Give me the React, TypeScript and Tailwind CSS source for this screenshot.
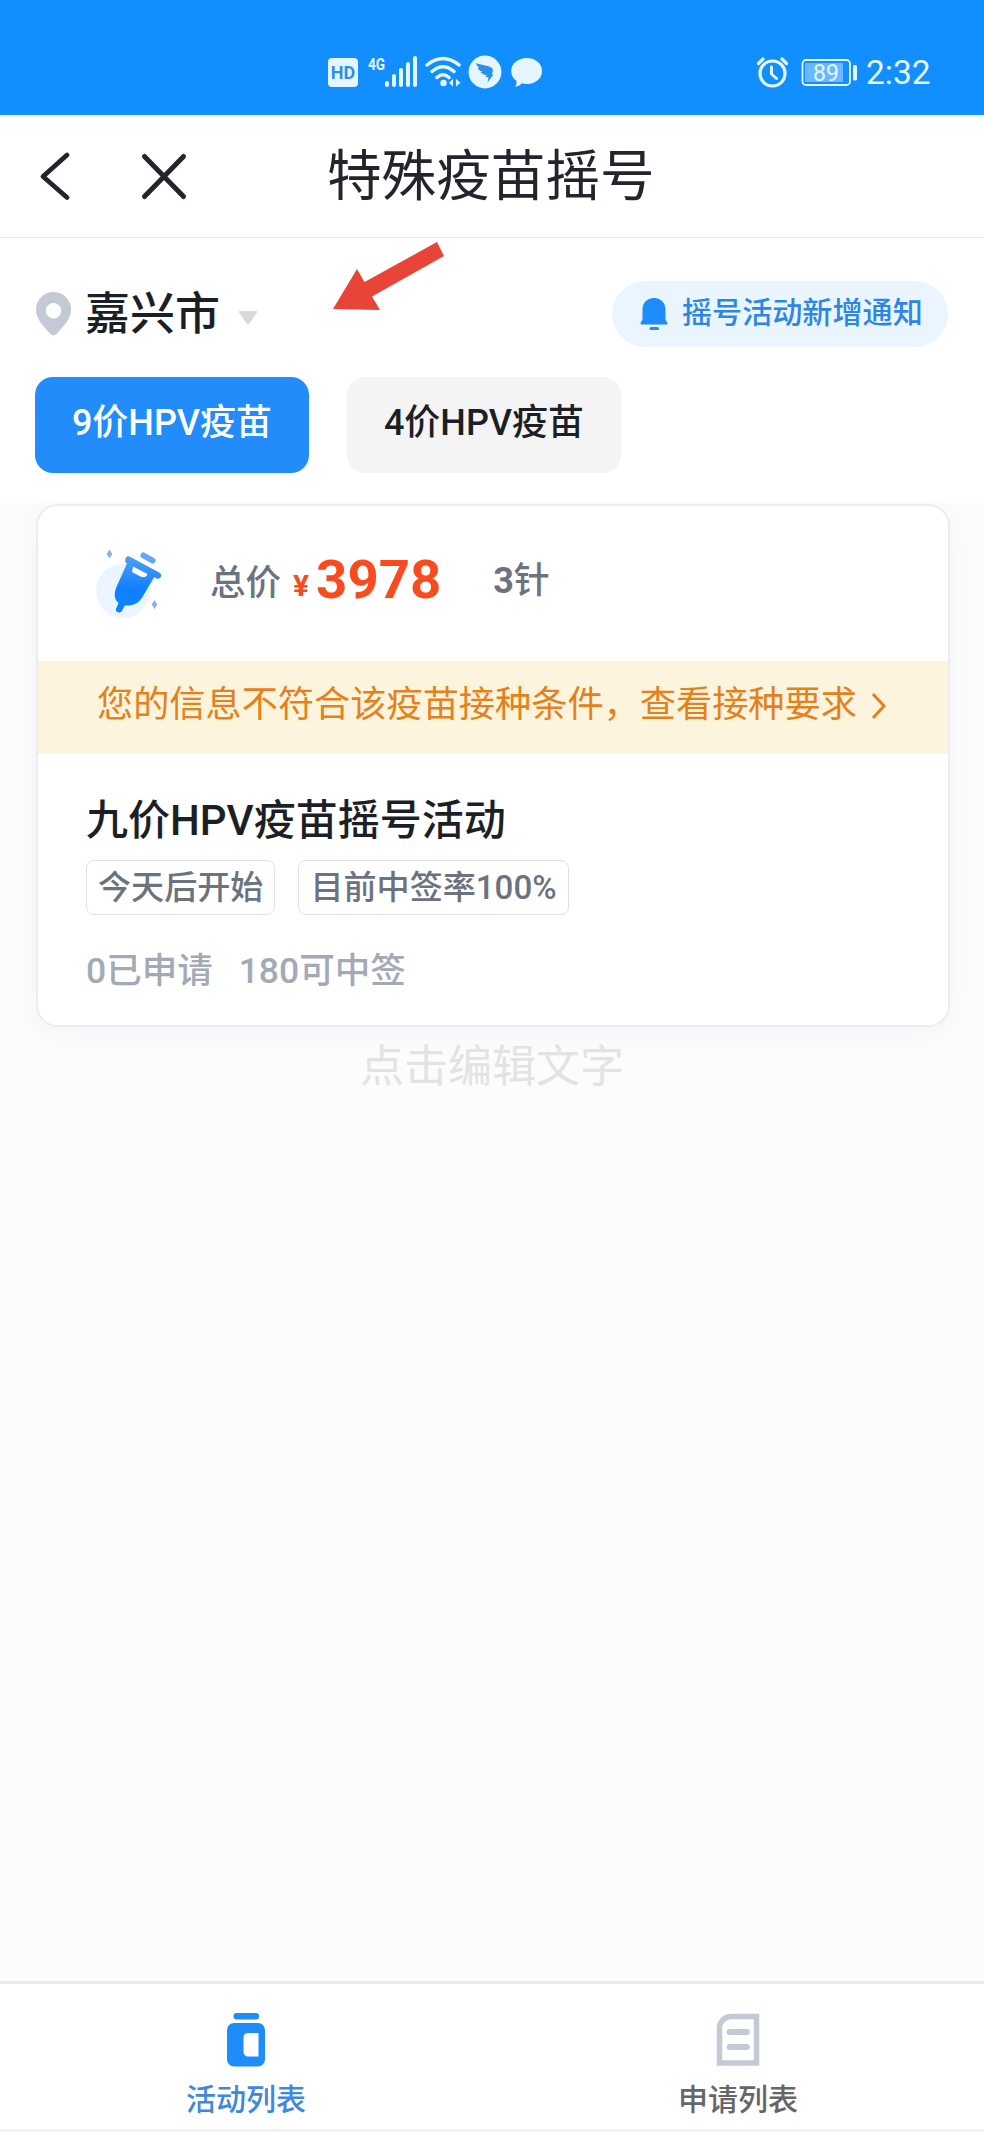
import React, { useState } from 'react';

const tabs = ['9价HPV疫苗', '4价HPV疫苗'];
const tags = ['今天后开始', '目前中签率100%'];

const StatusBar = () => (
  <div className="flex h-[115px] items-end bg-[#128fff] pb-[25px] text-[#e6f6ff]">
    <svg className="ml-[326px] h-[36px] w-[220px] shrink-0" viewBox="326 54 220 36" fill="currentColor">
      <rect x="328" y="58" width="30" height="29" rx="4" />
      <text x="343" y="79" fontSize="18" fontWeight="700" textAnchor="middle" fill="#2f8fe6" className="font-['Roboto',sans-serif]">HD</text>
      <text x="368" y="70" fontSize="17" fontWeight="700" textLength="17" lengthAdjust="spacingAndGlyphs" className="font-['Roboto',sans-serif]">4G</text>
      <g stroke="currentColor" strokeWidth="4" strokeLinecap="round">
        <path d="M387 83v2M394 76v9M401 70v15M408 64v21M415 58v27" />
      </g>
      <g fill="none" stroke="currentColor" strokeWidth="3.4" strokeLinecap="round">
        <path d="M427 65Q443 52 459 65M432 71.500Q443 62 454 71.500M437 77.500Q443 72 449 77.500" />
      </g>
      <circle cx="443.500" cy="83" r="3.200" />
      <path d="M453 79v7.500l-4-3.700zM456 79v7.500l4.500-3.700z" />
      <circle cx="485" cy="72" r="16.400" />
      <path d="M476 63c5 2 12 2 16 5 1.500 1.500 1 4-.5 6.500h2l-6 8 1-5.500h-3l1-2c-3 0-5-1.500-6-3l2 0c-3-1-4.500-3-5-4.500l2 .3c-2-1.300-3.200-3-3.500-4.800z" fill="#2f8fe6" />
      <path d="M527 58c8.500 0 15 5.500 15 13s-6.500 13-15 13c-2 0-3.300-.2-5-.7-2 2-4 3.200-7 3.500 1.300-1.700 1.700-3.500 1.500-5.800-3.500-2.500-5.300-6-5.300-10 0-7.500 7-13 15.800-13z" />
    </svg>
    <svg className="ml-[209px] h-[36px] w-[105px] shrink-0" viewBox="755 54 105 36" fill="none" stroke="currentColor">
      <circle cx="772.500" cy="73.500" r="12.500" strokeWidth="3.200" />
      <path d="M771.500 67v7l5 4.500" strokeWidth="3" strokeLinecap="round" strokeLinejoin="round" />
      <path d="M758.500 63.500l4.500-4.500M786.500 63.500l-4.500-4.500" strokeWidth="3.200" strokeLinecap="round" />
      <rect x="802.500" y="60" width="47.500" height="25" rx="3.500" strokeWidth="1.800" />
      <rect x="805" y="63" width="38" height="19" fill="#6bb8ff" stroke="none" />
      <rect x="853" y="65" width="4" height="15.500" rx="1.500" fill="currentColor" stroke="none" />
      <text x="826" y="81" fontSize="23" textAnchor="middle" fill="currentColor" stroke="none" className="font-['Roboto',sans-serif]">89</text>
    </svg>
    <span className="ml-[6px] text-[33.5px] leading-[34px]">2:32</span>
  </div>
);

const TitleBar = () => (
  <div className="flex h-[123px] items-center border-b border-[#e6e6e6] bg-white text-[#22252c]">
    <svg className="ml-[39px] h-[50px] w-[32px] shrink-0" viewBox="0 0 32 50" fill="none" stroke="currentColor" strokeWidth="4.800" strokeLinecap="round" strokeLinejoin="round">
      <path d="M28 4L4 25.500l24 21" />
    </svg>
    <svg className="ml-[69px] h-[50px] w-[48px] shrink-0" viewBox="0 0 48 50" fill="none" stroke="currentColor" strokeWidth="5" strokeLinecap="round">
      <path d="M4.500 5.500l39 40M43.500 5.500l-39 40" />
    </svg>
    <h1 className="ml-[139px] text-[54.6px] leading-none">特殊疫苗摇号</h1>
  </div>
);

const VaccineIcon = () => (
  <svg className="ml-[56px] h-[76px] w-[70px] shrink-0" viewBox="93 548 70 76">
    <defs>
      <linearGradient id="vial" x1="0" y1="0" x2="0" y2="1">
        <stop offset="0" stopColor="#4e9ff5" />
        <stop offset="0.6" stopColor="#0f80ff" />
        <stop offset="1" stopColor="#0d84ff" />
      </linearGradient>
    </defs>
    <circle cx="122" cy="593" r="27" fill="#eaf5ff" />
    <path d="M108.500 551.500l2.800 4.500-2.800 4.500-2.800-4.500zM153.500 602l2.800 4.500-2.800 4.500-2.800-4.500z" fill="#8fade8" />
    <path d="M142.500 557.500l9 5" stroke="#62a8f3" strokeWidth="6" strokeLinecap="round" />
    <path fill="url(#vial)" d="M125 559.500c1.200-1.700 2.800-1.500 5-.3l28.500 15.600c2 1.200 2.200 2.500 1.200 4.200s-2.500 2.200-4.500 1.200l-2-1-12.500 21c-3.500 5.300-8.500 7.300-17 7.300l-2.800 5.500c-1.800 3-7 1-5.900-2.300l2.600-5.700c-4.500-3.500-4.800-9.500-2.200-16l10.600-23.500c-2.500-1.500-2-4.300-1-6z" />
    <path d="M132 568.500l14.500 7.500c-1 3-3.500 4-6.500 2.800l-9-4.800z" fill="#fff" />
  </svg>
);

const JarIcon = () => (
  <svg className="h-[56px] w-[44px]" viewBox="0 0 44 56" fill="#1f8cfb">
    <rect x="9.500" y="1" width="25.500" height="6.500" rx="3" />
    <path fillRule="evenodd" d="M10 11h24a7 7 0 017 7v29.500a7 7 0 01-7 7H10a7 7 0 01-7-7V18a7 7 0 017-7zm14 10a4.500 4.500 0 00-4.500 4.500v14.500a4.500 4.500 0 004.500 4.500h10.500V21z" />
  </svg>
);

const ListIcon = () => (
  <svg className="h-[56px] w-[44px]" viewBox="0 0 44 56" fill="none" stroke="#c3c9d5">
    <path d="M15 4.500h25.500v46.500H3.500V16A11.500 11.500 0 0115 4.500z" strokeWidth="5.500" />
    <path d="M13.500 20h17.500M13.500 35h17.500" strokeWidth="5.800" strokeLinecap="round" />
  </svg>
);

const App = () => {
  const [active, setActive] = useState(0);

  return (
    <div className="flex h-[2132px] w-[984px] flex-col overflow-hidden bg-[#fcfcfc] font-['Roboto','Noto_Sans_CJK_SC',sans-serif]">
      <StatusBar />
      <TitleBar />

      <div className="relative h-[265px] shrink-0 bg-white">
        <div className="flex h-[139px] items-center pt-[13px]">
          <svg className="ml-[35px] h-[46px] w-[37px] shrink-0" viewBox="0 0 37 46" fill="#c3c9d5">
            <path fillRule="evenodd" d="M18.500 1A17.500 17.500 0 0136 18.500c0 8.500-6.500 16-13.500 23.500-3 3.200-5 3.200-8 0C7.500 34.500 1 27 1 18.500A17.500 17.500 0 0118.500 1zm0 11a7.700 7.700 0 100 15.400 7.700 7.700 0 000-15.400z" />
          </svg>
          <span className="ml-[13px] text-[45px] font-medium leading-none text-[#1c1f26]">嘉兴市</span>
          <svg className="ml-[18px] mt-[8px] h-[16px] w-[20px]" viewBox="0 0 20 16" fill="#d9d9d9">
            <path d="M2 1h16q2 0 .8 1.700l-7.600 11q-1.200 1.600-2.400 0L1.200 2.700Q0 1 2 1z" />
          </svg>
          <button className="ml-auto mr-[36px] flex h-[66px] w-[336px] items-center rounded-full bg-[#ebf5ff] pl-[28px] text-[#2b87e3]">
            <svg className="h-[34px] w-[28px]" viewBox="0 0 28 34" fill="#1f8cfb">
              <path d="M14 1c7 0 11.500 5 11.500 11.500V22c0 1.500 2 3 2 4.500 0 .8-.5 1-1.200 1H1.700c-.7 0-1.200-.2-1.200-1 0-1.500 2-3 2-4.500v-9.500C2.500 6 7 1 14 1z" />
              <rect x="9.500" y="30" width="9.500" height="3" rx="1.500" />
            </svg>
            <span className="ml-[14px] mt-[-2px] text-[30.1px] font-medium leading-none">摇号活动新增通知</span>
          </button>
        </div>
        <div className="flex gap-[38px] pl-[35px]">
          {tabs.map((tab, i) => (
            <button
              key={tab}
              onClick={() => setActive(i)}
              className={`flex h-[96px] w-[274px] items-center justify-center rounded-[18px] pb-[5px] text-[36px] font-medium leading-none ${
                active === i ? 'bg-[#218cfa] text-white' : 'bg-[#f4f4f4] text-[#1c1f26]'
              }`}
            >
              {tab}
            </button>
          ))}
        </div>
        {/* pointer to the city picker */}
        <svg className="absolute left-[330px] top-0 h-[80px] w-[118px]" viewBox="330 238 118 80">
          <path d="M333 309l24-40 7.500 13L437 242l7 14-72 40.500 8 13.500z" fill="#e84538" />
        </svg>
      </div>

      <div className="ml-[36px] mr-[34px] mt-px h-[523px] shrink-0 rounded-[22px] border-2 border-[#ededef] bg-white shadow-[0_4px_24px_rgba(80,130,200,0.07)]">
        <div className="flex h-[155px] items-center text-[#6b7280]">
          <VaccineIcon />
          <span className="ml-[46px] text-[35.5px] font-medium leading-none">总价</span>
          <span className="ml-[12px] mt-[4px] text-[30px] font-bold leading-none text-[#fa4b1e]">¥</span>
          <span className="ml-[7px] mt-[-9px] text-[54.5px] font-bold leading-none text-[#fa4b1e]">3978</span>
          <span className="ml-[52px] mt-[-5px] text-[36px] font-medium leading-none"><b>3</b>针</span>
        </div>
        <div className="flex h-[93px] items-center bg-[#fdf4dd] pb-[5px] pl-[59px] text-[#e4811a]">
          <span className="whitespace-nowrap text-[36.2px] leading-none">您的信息不符合该疫苗接种条件，查看接种要求</span>
          <svg className="ml-[13px] mt-[2px] h-[28px] w-[18px]" viewBox="0 0 18 28" fill="none" stroke="currentColor" strokeWidth="3">
            <path d="M3 2l11 12L3 26" />
          </svg>
        </div>
        <div className="pl-[48px] pt-[46px]">
          <h2 className="text-[42px] font-medium leading-none text-[#1c1f26]">九价HPV疫苗摇号活动</h2>
          <div className="mt-[18px] flex gap-[23px] text-[33.1px] font-medium leading-none text-[#6b7280]">
            {tags.map((tag) => (
              <span key={tag} className="flex h-[55px] items-center whitespace-nowrap rounded-[8px] border border-[#dfe1e5] px-[11px]">
                {tag}
              </span>
            ))}
          </div>
          <div className="mt-[39px] flex gap-[26px] text-[35.5px] font-medium leading-none text-[#a3a9b5]">
            <span>0已申请</span>
            <span>180可中签</span>
          </div>
        </div>
      </div>
      <p className="mt-[18px] text-center text-[44px] leading-none text-[#e3e3e3]">点击编辑文字</p>

      <div className="mt-auto flex h-[151px] shrink-0 border-b-[3px] border-t-[3px] border-b-[#f1f1f1] border-t-[#e8eaec] bg-white text-[30px] font-medium leading-none">
        <div className="flex w-1/2 flex-col items-center pt-[28px] text-[#3f87e0]">
          <JarIcon />
          <span className="mt-[17px]">活动列表</span>
        </div>
        <div className="flex w-1/2 flex-col items-center pt-[28px] text-[#666]">
          <ListIcon />
          <span className="mt-[17px]">申请列表</span>
        </div>
      </div>
    </div>
  );
};

export default App;
